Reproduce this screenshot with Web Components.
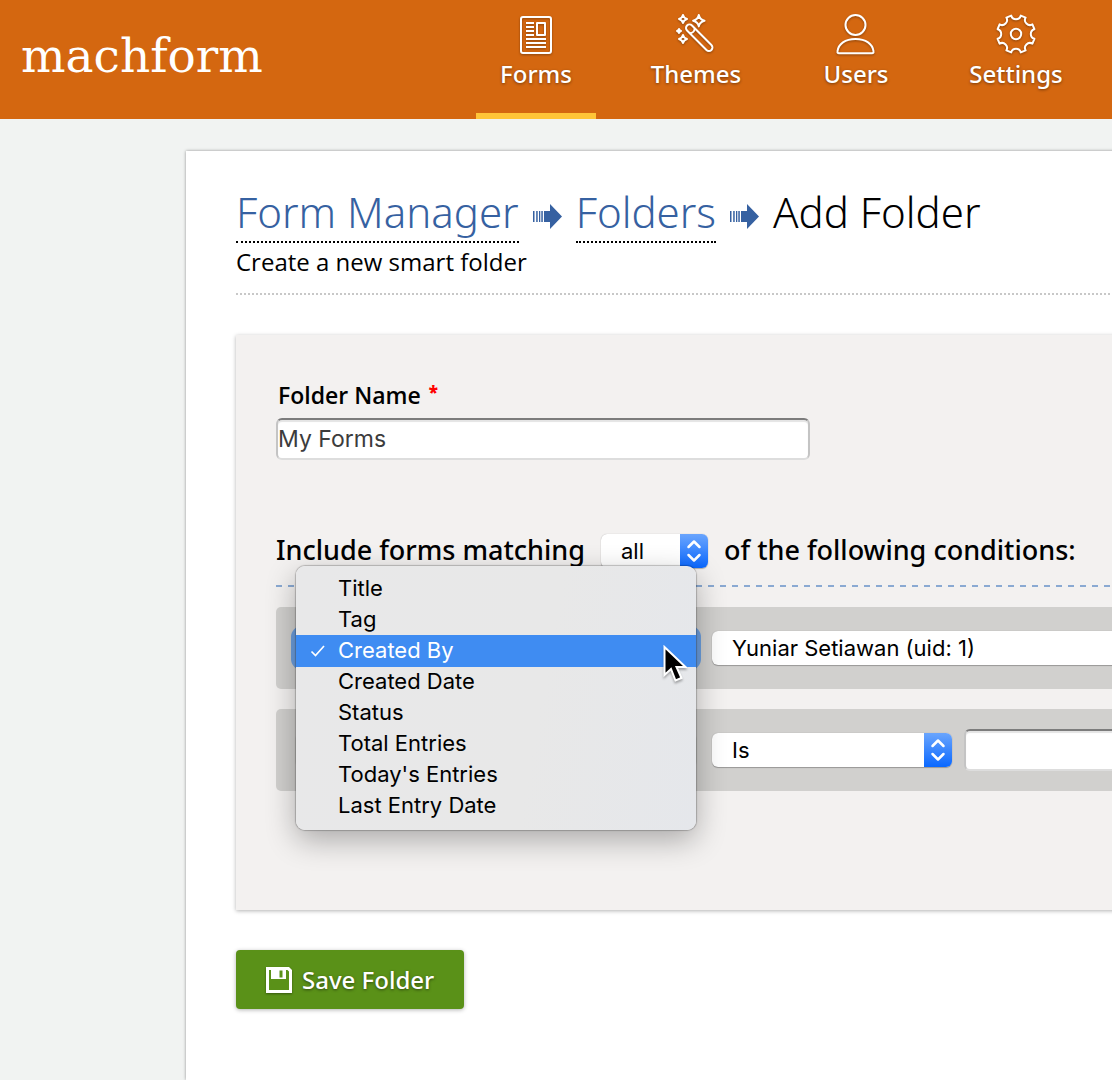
<!DOCTYPE html>
<html lang="en">
<head>
<meta charset="utf-8">
<meta name="viewport" content="width=device-width, initial-scale=1">
<title>MachForm - Add Folder</title>
<style>
  body {
    margin: 0;
    min-height: 100vh;
    background: #f1f3f2;
    color: #000;
    font-family: "Open Sans", "Noto Sans", sans-serif;
    --ui-font: Inter, Roboto, sans-serif;
    --medium-font: "Noto Sans", "Open Sans", sans-serif;
  }
</style>
</head>
<body>
<folder-app></folder-app>

<script>
const icons = {
  forms: `
    <rect x="5" y="3" width="30" height="36" rx="2"/>
    <path d="M10 9h8M10 13h8M10 17h8M10 21h8M10 25h20M10 29h20M10 33h20"/>
    <rect x="21" y="9" width="8" height="12"/>`,
  themes: `
    <g transform="translate(13.5 14) rotate(45)">
      <rect x="-3.5" y="-3.5" width="34.5" height="7" rx="3.5"/>
      <path d="M3.8-3.5a5 5 0 0 1 0 7"/>
    </g>
    <path d="M22.8 1q1 4.700 5.700 5.700q-4.700 1-5.700 5.700q-1-4.700-5.700-5.700q4.700-1 5.700-5.700z"/>
    <path d="M7 1q.8 3.200 4 4q-3.200.8-4 4q-.8-3.200-4-4q3.200-.8 4-4z"/>
    <path d="M7 21q.8 3.200 4 4q-3.200.8-4 4q-.8-3.200-4-4q3.200-.8 4-4z"/>
    <path d="M3 15q.5 1.500 2 2q-1.500.5-2 2q-.5-1.500-2-2q1.500-.5 2-2z"/>`,
  users: `
    <circle cx="19.500" cy="11" r="10"/>
    <path d="M3 39.200q-2 0-1.500-2C2.500 30 9 25 19.500 25s17 5 18 12.200q.5 2-1.500 2z"/>`,
  settings: `
    <g transform="translate(20 20)">
      <path d="M-4.800-18.400A5 5 0 0 0 4.800-18.400L9.600-16.400A5 5 0 0 0 16.400-9.600L18.400-4.800A5 5 0 0 0 18.400 4.800L16.400 9.600A5 5 0 0 0 9.600 16.400L4.800 18.400A5 5 0 0 0-4.800 18.400L-9.600 16.400A5 5 0 0 0-16.400 9.600L-18.400 4.800A5 5 0 0 0-18.400-4.800L-16.400-9.600A5 5 0 0 0-9.600-16.400Z"/>
      <circle r="5.200"/>
    </g>`,
};

class NavItem extends HTMLElement {
  constructor() {
    super();
    this.attachShadow({ mode: "open" });
  }

  connectedCallback() {
    this.shadowRoot.innerHTML = `
      <style>
        :host { display: block; flex: 0 1 120px; }
        a {
          display: flex;
          flex-direction: column;
          align-items: center;
          box-sizing: border-box;
          height: 100%;
          padding-top: 14px;
          border-bottom: 6px solid transparent;
          color: #fff;
          font-family: var(--medium-font);
          font-size: 24px;
          font-weight: 500;
          line-height: 40px;
          text-decoration: none;
          text-shadow: 0 1px 3px rgba(0, 0, 0, .45);
        }
        :host([active]) a { border-bottom-color: #ffc538; }
        svg {
          overflow: visible;
          fill: none;
          stroke: #fff;
          stroke-width: 2;
          stroke-linejoin: round;
          filter: drop-shadow(0 1px 1px rgba(0, 0, 0, .35));
        }
      </style>
      <a href="#">
        <svg width="40" height="40" viewBox="0 0 40 40" aria-hidden="true">${icons[this.getAttribute("icon")]}</svg>
        <span><slot></slot></span>
      </a>
    `;
  }
}
customElements.define("nav-item", NavItem);

class SiteHeader extends HTMLElement {
  constructor() {
    super();
    this.attachShadow({ mode: "open" });
    this.shadowRoot.innerHTML = `
      <style>
        :host { display: block; background: #d46710; }
        header {
          display: flex;
          justify-content: space-between;
          height: 119px;
          padding: 0 36px 0 21px;
        }
        .logo {
          align-self: center;
          padding-bottom: 8px;
          color: #fff;
          font: 47px/60px "DejaVu Serif", serif;
          text-decoration: none;
        }
        nav { display: flex; flex: 0 1 600px; gap: 40px; }
      </style>
      <header>
        <a class="logo" href="#">machform</a>
        <nav>
          <nav-item icon="forms" active>Forms</nav-item>
          <nav-item icon="themes">Themes</nav-item>
          <nav-item icon="users">Users</nav-item>
          <nav-item icon="settings">Settings</nav-item>
        </nav>
      </header>
    `;
  }
}
customElements.define("site-header", SiteHeader);

class CrumbArrow extends HTMLElement {
  constructor() {
    super();
    this.attachShadow({ mode: "open" });
    this.shadowRoot.innerHTML = `
      <style>
        :host { display: block; padding-top: 17px; }
        svg { display: block; fill: #3661a1; }
      </style>
      <svg width="29" height="26" viewBox="0 0 29 26" aria-hidden="true">
        <path d="M0 7h1.500v11H0zM3.200 7h1.500v11H3.200zM6 7h1.300v11H6zM8.300 7h1.500v11H8.300zM11 7h6V0l12 12.500L17 25v-7h-6z"/>
      </svg>
    `;
  }
}
customElements.define("crumb-arrow", CrumbArrow);

class PageHeading extends HTMLElement {
  constructor() {
    super();
    this.attachShadow({ mode: "open" });
    this.shadowRoot.innerHTML = `
      <style>
        :host { display: block; border-bottom: 2px dotted #c8c8c8; }
        h1 {
          display: flex;
          align-items: flex-start;
          gap: 14px;
          margin: 0;
          font-family: var(--medium-font);
          font-size: 42px;
          font-weight: 300;
          line-height: 50px;
          white-space: nowrap;
        }
        a {
          padding-bottom: 4px;
          color: #3661a1;
          text-decoration: none;
          border-bottom: 2px dotted #000;
        }
        p { margin: 0; padding-bottom: 12px; font-size: 24px; line-height: 38px; }
      </style>
      <h1>
        <a href="#">Form Manager</a>
        <crumb-arrow></crumb-arrow>
        <a href="#">Folders</a>
        <crumb-arrow></crumb-arrow>
        <span>Add Folder</span>
      </h1>
      <p>Create a new smart folder</p>
    `;
  }
}
customElements.define("page-heading", PageHeading);

class TextBox extends HTMLElement {
  constructor() {
    super();
    this.attachShadow({ mode: "open" });
  }

  connectedCallback() {
    const label = this.getAttribute("label");
    this.shadowRoot.innerHTML = `
      <style>
        :host { display: block; }
        label {
          display: flex;
          gap: 8px;
          padding: 0 2px 3px;
          font-size: 23px;
          font-weight: 600;
          line-height: 40px;
        }
        .required { color: #f00; font-size: 17px; font-weight: 800; line-height: 34px; }
        input {
          display: block;
          box-sizing: border-box;
          width: 100%;
          height: 42px;
          padding: 0;
          border: 2px solid #c4c4c4;
          border-top-color: #7c7c7c;
          border-bottom-color: #ddd;
          border-radius: 6px;
          background: #fff;
          box-shadow: inset 0 2px 1px #e4e4e4;
          color: #3c3c3c;
          font: 23px var(--ui-font);
          outline: none;
        }
      </style>
      ${label ? `<label for="field">${label}<span class="required">*</span></label>` : ""}
      <input id="field" type="text" value="${this.getAttribute("value") || ""}"
        ${label ? "" : 'aria-label="Keyword"'}>
    `;
  }
}
customElements.define("text-box", TextBox);

class SelectBox extends HTMLElement {
  constructor() {
    super();
    this.attachShadow({ mode: "open" });
  }

  connectedCallback() {
    const options = this.getAttribute("options").split("|");
    const value = this.getAttribute("value") || options[0];

    this.shadowRoot.innerHTML = `
      <style>
        :host { display: block; position: relative; }
        .box {
          display: flex;
          height: 34px;
          border-radius: 6px;
          background: #fff;
          box-shadow: 0 0 1px rgba(0, 0, 0, .3), 0 1px 1px rgba(0, 0, 0, .25);
          overflow: hidden;
        }
        :host([open]) .box { box-shadow: 0 0 0 5px #6c9ede; }
        select {
          flex: 1;
          min-width: 0;
          padding: 0 0 0 20px;
          border: 0;
          appearance: none;
          background: transparent;
          color: #000;
          font: 22px var(--ui-font);
          outline: none;
        }
        svg { flex: none; background: linear-gradient(#6aa5fd, #0a68ff); }
      </style>
      <div class="box">
        <select aria-label="${this.getAttribute("label")}">
          ${options.map((option) => `<option${option === value ? " selected" : ""}>${option}</option>`).join("")}
        </select>
        <svg width="28" height="34" viewBox="0 0 28 34" aria-hidden="true">
          <path d="M8.500 13l5.500-5.500 5.500 5.500M8.500 21l5.500 5.500 5.500-5.500" fill="none" stroke="#fff"
            stroke-width="2.500" stroke-linecap="round" stroke-linejoin="round"/>
        </svg>
      </div>
      <slot></slot>
    `;
  }
}
customElements.define("select-box", SelectBox);

// popup list of an opened select
class OptionMenu extends HTMLElement {
  constructor() {
    super();
    this.attachShadow({ mode: "open" });
  }

  connectedCallback() {
    const items = ["Title", "Tag", "Created By", "Created Date", "Status", "Total Entries", "Today's Entries", "Last Entry Date"];
    const current = this.getAttribute("current");

    this.shadowRoot.innerHTML = `
      <style>
        :host {
          position: absolute;
          z-index: 10;
          top: -65px;
          left: 0;
          right: 0;
          font-family: var(--ui-font);
          font-size: 22px;
          line-height: 31px;
        }
        ul {
          margin: 0;
          padding: 7px 0 9px;
          list-style: none;
          border-radius: 9px;
          background: linear-gradient(100deg, #e8e8e9, #e8e8e8 60%, #e5e7eb);
          box-shadow: 0 0 1px 1px rgba(0, 0, 0, .22), 0 10px 30px rgba(0, 0, 0, .3);
        }
        li { display: flex; align-items: center; padding-left: 13px; }
        li svg { width: 18px; height: 16px; margin-right: 11px; }
        .current { background: #3f8cf2; box-shadow: 0 1px #3f8cf2; color: #fff; }
        .cursor {
          position: absolute;
          top: 79px;
          right: 9px;
          filter: drop-shadow(0 2px 1px rgba(0, 0, 0, .3));
        }
      </style>
      <ul role="listbox" aria-label="Condition">
        ${items
          .map(
            (item) => `
            <li role="option" aria-selected="${item === current}" class="${item === current ? "current" : ""}">
              <svg viewBox="0 0 18 16" aria-hidden="true">
                ${item === current ? '<path d="M2.500 8.500l4 4L15 3" fill="none" stroke="#fff" stroke-width="1.700"/>' : ""}
              </svg>
              ${item}
            </li>`,
          )
          .join("")}
      </ul>
      <svg class="cursor" width="24" height="38" viewBox="0 0 24 38" aria-hidden="true">
        <path d="M1.500 2v28l6.500-6 4.500 11.500 6-2.500-5-11h9z" fill="#000" stroke="#fff" stroke-width="2"/>
      </svg>
    `;
  }
}
customElements.define("option-menu", OptionMenu);

class ConditionRow extends HTMLElement {
  constructor() {
    super();
    this.attachShadow({ mode: "open" });
    this.shadowRoot.innerHTML = `
      <style>
        :host {
          display: flex;
          align-items: center;
          gap: 12px;
          box-sizing: border-box;
          height: 82px;
          padding: 0 20px;
          border-radius: 5px;
          background: #d1d0ce;
        }
      </style>
      <slot></slot>
    `;
  }
}
customElements.define("condition-row", ConditionRow);

class FolderForm extends HTMLElement {
  constructor() {
    super();
    this.attachShadow({ mode: "open" });
    this.shadowRoot.innerHTML = `
      <style>
        :host {
          display: flex;
          flex-direction: column;
          box-sizing: border-box;
          padding: 40px 40px 119px;
          background: #f3f1f0;
          box-shadow: 0 1px 4px rgba(0, 0, 0, .3);
        }
        .name { width: 534px; max-width: 100%; }
        .rule {
          display: flex;
          align-items: center;
          gap: 16px;
          height: 34px;
          margin-top: 74px;
          font-family: var(--medium-font);
          font-size: 27px;
          font-weight: 500;
          white-space: nowrap;
        }
        .rule span { padding-bottom: 4px; }
        .rule select-box { width: 107px; }
        .line {
          height: 2px;
          margin: 17px 0 20px;
          background: repeating-linear-gradient(90deg, #8aa9d2 0 6px, transparent 6px 12px);
        }
        .rows { display: flex; flex-direction: column; gap: 20px; }
        .element { flex: 0 0 400px; margin-right: 4px; }
        .value { flex: 1; }
        .operator { flex: 0 0 240px; }
      </style>
      <text-box class="name" label="Folder Name" value="My Forms"></text-box>
      <div class="rule">
        <span>Include forms matching</span>
        <select-box label="Match" options="all|any"></select-box>
        <span>of the following conditions:</span>
      </div>
      <div class="line"></div>
      <div class="rows">
        <condition-row>
          <select-box class="element" open label="Condition 1" options="Title|Tag|Created By" value="Created By">
            <option-menu current="Created By"></option-menu>
          </select-box>
          <select-box class="value" label="User" options="Yuniar Setiawan (uid: 1)"></select-box>
        </condition-row>
        <condition-row>
          <select-box class="element" label="Condition 2" options="Title|Tag"></select-box>
          <select-box class="operator" label="Operator" options="Is|Is Not"></select-box>
          <text-box class="value"></text-box>
        </condition-row>
      </div>
    `;
  }
}
customElements.define("folder-form", FolderForm);

class SaveButton extends HTMLElement {
  constructor() {
    super();
    this.attachShadow({ mode: "open" });
    this.shadowRoot.innerHTML = `
      <style>
        :host { display: block; }
        button {
          display: flex;
          align-items: center;
          gap: 10px;
          height: 59px;
          padding: 0 30px;
          border: 0;
          border-radius: 4px;
          background: #5a9118;
          box-shadow: 0 1px 4px rgba(0, 0, 0, .3);
          color: #fff;
          font: 500 24px var(--medium-font);
          text-shadow: 0 1px 3px rgba(0, 0, 0, .5);
        }
        svg { filter: drop-shadow(0 1px 1px rgba(0, 0, 0, .4)); }
      </style>
      <button type="button">
        <svg width="26" height="26" viewBox="0 0 26 26" aria-hidden="true">
          <path d="M0 0h23l3 3v23H0z" fill="#fff"/>
          <path d="M3 3h2v9h15V3h1.500l1.500 1.500V23H3zM13.500 3.500h3v7h-3z" fill="#5a9118"/>
        </svg>
        <slot></slot>
      </button>
    `;
  }
}
customElements.define("save-button", SaveButton);

class FolderApp extends HTMLElement {
  constructor() {
    super();
    this.attachShadow({ mode: "open" });
    this.shadowRoot.innerHTML = `
      <style>
        :host { display: flex; flex-direction: column; min-height: 100vh; overflow: hidden; }
        main {
          flex: 1;
          box-sizing: border-box;
          margin: 32px -180px 0 186px;
          padding: 36px 50px;
          background: #fff;
          box-shadow: 0 0 3px rgba(0, 0, 0, .4);
        }
        page-heading { margin-bottom: 40px; }
        folder-form { margin-bottom: 40px; }
      </style>
      <site-header></site-header>
      <main>
        <page-heading></page-heading>
        <folder-form></folder-form>
        <save-button>Save Folder</save-button>
      </main>
    `;
  }
}
customElements.define("folder-app", FolderApp);
</script>
</body>
</html>
